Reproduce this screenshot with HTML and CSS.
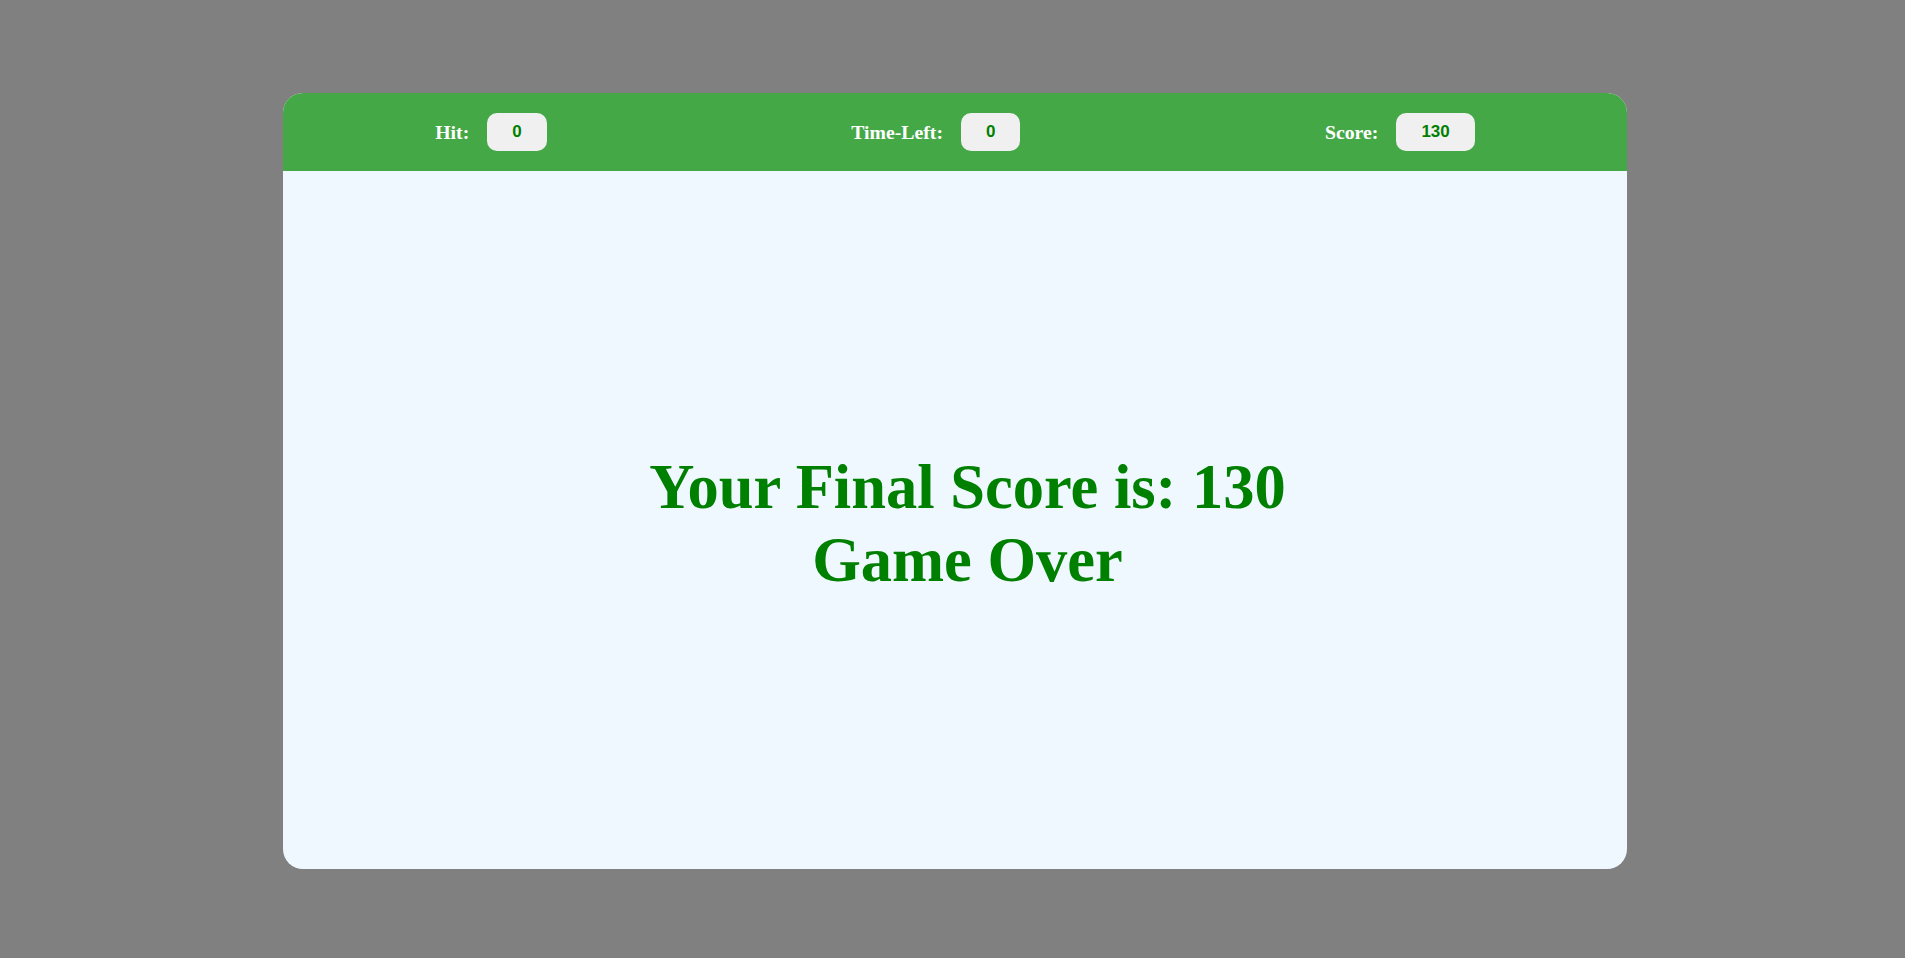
FILE: index.html
```html
<!DOCTYPE html>
<html>
<head>
<meta charset="utf-8">
<title>Game Over</title>
<link rel="stylesheet" href="styles.css">
</head>
<body>
<div class="panel">
  <div class="topbar">
    <div class="stat"><span class="label">Hit:</span><span class="value">0</span></div>
    <div class="stat"><span class="label">Time-Left:</span><span class="value">0</span></div>
    <div class="stat"><span class="label">Score:</span><span class="value">130</span></div>
  </div>
  <div class="board">
    <h1 class="final">Your Final Score is: 130<br>Game Over</h1>
  </div>
</div>
</body>
</html>
```

FILE: styles.css
```css
html, body {
  margin: 0;
  padding: 0;
  height: 100%;
}
body {
  background: #808080;
  font-family: "Liberation Serif", "Times New Roman", serif;
  overflow: hidden;
}
.panel {
  margin: 93px 0 0 283px;
  width: 1344px;
  height: 776px;
  border-radius: 20px;
  background: #f0f8ff;
  overflow: hidden;
  display: flex;
  flex-direction: column;
}
.topbar {
  height: 78px;
  background: #45a846;
  display: flex;
  justify-content: space-around;
  align-items: center;
}
.stat {
  display: flex;
  align-items: center;
  gap: 18px;
}
.label {
  color: #ffffff;
  font-weight: bold;
  font-size: 19.75px;
}
.value {
  display: inline-flex;
  align-items: center;
  justify-content: center;
  height: 38px;
  padding: 0 25px;
  border-radius: 10px;
  background: #f0f0f0;
  color: #008000;
  font-family: "Liberation Sans", Arial, sans-serif;
  font-weight: bold;
  font-size: 17px;
}
.board {
  flex: 1;
  display: flex;
  align-items: center;
  justify-content: center;
}
.final {
  margin: 8px 0 0 25px;
  color: #008000;
  font-size: 62.5px;
  line-height: 73px;
  font-weight: bold;
  text-align: center;
  white-space: nowrap;
}
```
